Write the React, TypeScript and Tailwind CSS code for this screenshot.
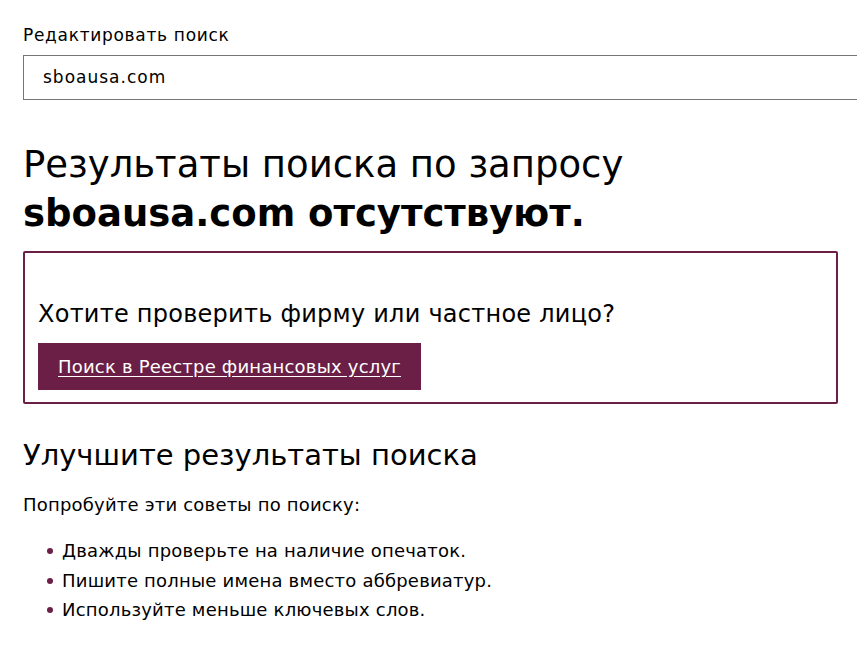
import React from 'react';

const tips = [
  'Дважды проверьте на наличие опечаток.',
  'Пишите полные имена вместо аббревиатур.',
  'Используйте меньше ключевых слов.',
];

export default function App() {
  return (
    <div className="min-h-screen bg-white text-black pl-[23px] pt-[22px] overflow-hidden" style={{ fontFamily: '"DejaVu Sans", Verdana, sans-serif' }}>
      <label className="block text-[17px] tracking-[0.7px] leading-[26px]">Редактировать поиск</label>
      <div className="mt-[7px] w-[860px] h-[45px] border border-[#767676] flex items-center pl-[19px] text-[17px] tracking-[1px]">
        sboausa.com
      </div>

      <h1 className="mt-[40px] text-[37px] leading-[49px] font-normal">
        Результаты поиска по запросу <br />
        <span className="font-bold">sboausa.com отсутствуют.</span>
      </h1>

      <div className="mt-[13px] w-[815px] border-2 border-[#6b1f46] rounded-[2px] px-[13px] pt-[45px] pb-[12px]">
        <p className="text-[24px] tracking-[0.25px] leading-[32px]">Хотите проверить фирму или частное лицо?</p>
        <button className="mt-[13px] h-[47px] px-[20px] bg-[#6b1f46] text-white text-[18px] tracking-[0.2px] underline underline-offset-[3px]">
          Поиск в Реестре финансовых услуг
        </button>
      </div>

      <h2 className="mt-[32px] text-[29px] leading-[38px] font-normal">Улучшите результаты поиска</h2>
      <p className="mt-[19px] text-[18px] tracking-[0.2px] leading-[24px]">Попробуйте эти советы по поиску:</p>
      <ul className="mt-[22px] pl-[24px] space-y-[5.5px]">
        {tips.map((t) => (
          <li key={t} className="flex items-center gap-[9px] text-[18px] tracking-[0.2px] leading-[24px]">
            <span className="w-[6px] h-[6px] rounded-full bg-[#6b1f46] shrink-0" />
            {t}
          </li>
        ))}
      </ul>
    </div>
  );
}
